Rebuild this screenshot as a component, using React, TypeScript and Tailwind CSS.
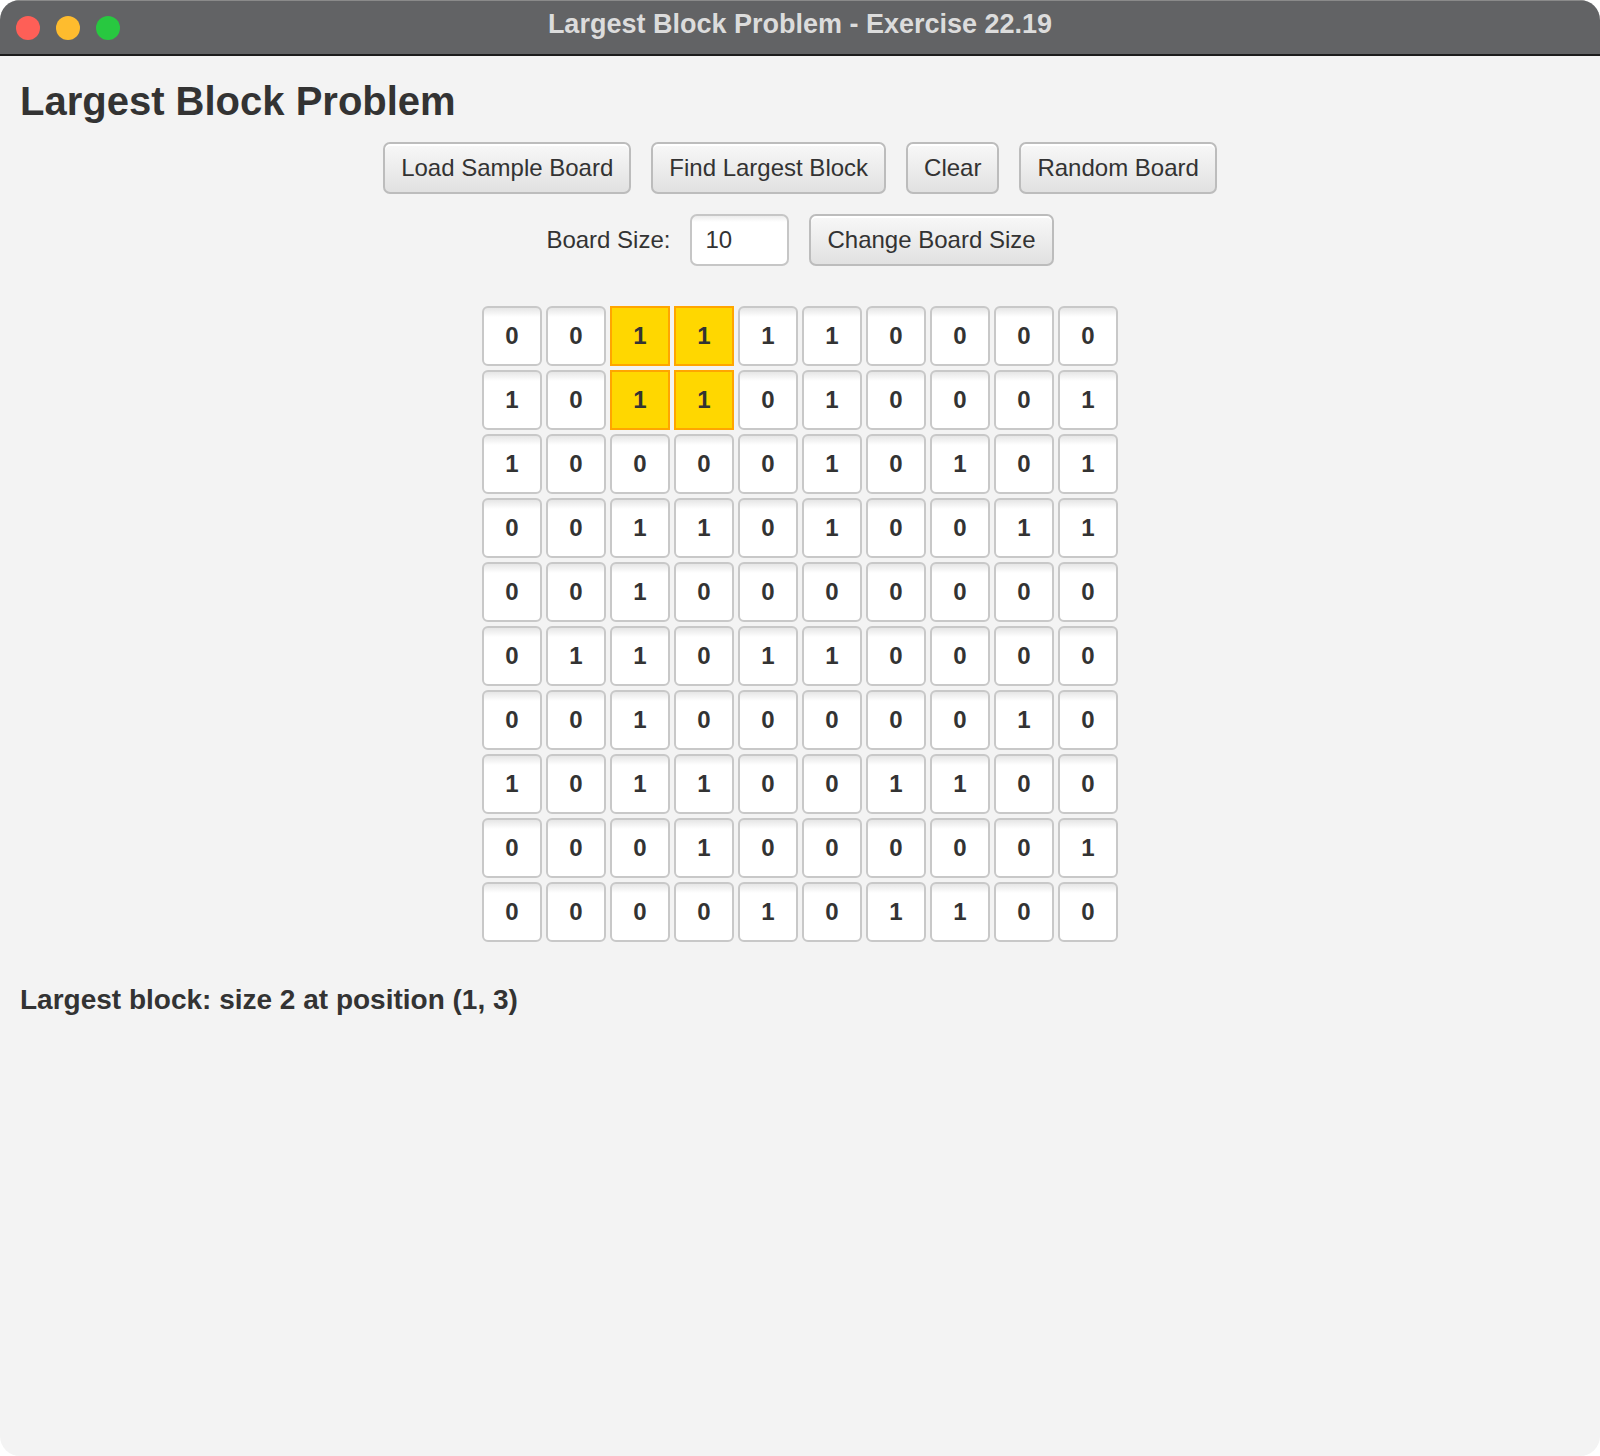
import React from "react"

const BOARD: number[][] = [
  [0, 0, 1, 1, 1, 1, 0, 0, 0, 0],
  [1, 0, 1, 1, 0, 1, 0, 0, 0, 1],
  [1, 0, 0, 0, 0, 1, 0, 1, 0, 1],
  [0, 0, 1, 1, 0, 1, 0, 0, 1, 1],
  [0, 0, 1, 0, 0, 0, 0, 0, 0, 0],
  [0, 1, 1, 0, 1, 1, 0, 0, 0, 0],
  [0, 0, 1, 0, 0, 0, 0, 0, 1, 0],
  [1, 0, 1, 1, 0, 0, 1, 1, 0, 0],
  [0, 0, 0, 1, 0, 0, 0, 0, 0, 1],
  [0, 0, 0, 0, 1, 0, 1, 1, 0, 0],
]

// cells of the largest block found
const HIGHLIGHT = new Set(["0-2", "0-3", "1-2", "1-3"])

function FxButton({ label }: { label: string }) {
  return (
    <button className="h-[52px] px-[16px] rounded-[7px] border-2 border-[#bcbcbc] bg-[linear-gradient(to_bottom,#f8f8f8,#e1e1e1)] shadow-[inset_0_2px_0_#ffffff] text-[24px] text-[#333333] leading-none">
      {label}
    </button>
  )
}

function Cell({ value, active }: { value: number; active: boolean }) {
  if (active) {
    return (
      <div className="w-[60px] h-[60px] flex items-center justify-center bg-[#ffd700] border-2 border-[#ffa500] text-[24px] font-bold text-[#333333]">
        {value}
      </div>
    )
  }
  return (
    <div className="w-[60px] h-[60px] flex items-center justify-center rounded-[6px] border-2 border-[#c8c8c8] bg-[linear-gradient(to_bottom,#e6e6e6,#ffffff_9px)] text-[24px] font-bold text-[#333333]">
      {value}
    </div>
  )
}

export default function App() {
  return (
    <div className="w-[1600px] h-[1456px] bg-white font-['Liberation_Sans',Arial,sans-serif]">
      <div className="h-full flex flex-col rounded-[20px] overflow-hidden bg-[#f3f3f3]">
        <div className="h-[56px] shrink-0 grid grid-cols-[1fr_auto_1fr] items-center bg-[#626365] border-b-2 border-[#1c1c1c] shadow-[inset_0_1px_0_#8a8a8a]">
          <div className="flex items-center gap-[16px] pl-[16px] pt-[2px]">
            <span className="w-[24px] h-[24px] rounded-full bg-[#fe5f57]" />
            <span className="w-[24px] h-[24px] rounded-full bg-[#febc2e]" />
            <span className="w-[24px] h-[24px] rounded-full bg-[#28c840]" />
          </div>
          <div className="pb-[5px] text-[27px] font-bold text-[#dcdcdc]">Largest Block Problem - Exercise 22.19</div>
          <div />
        </div>

        <div className="flex flex-col px-[20px] pt-[22px]">
          <h1 className="text-[40px] leading-[46px] font-bold text-[#333333]">Largest Block Problem</h1>

          <div className="mt-[18px] flex justify-center gap-[20px]">
            <FxButton label="Load Sample Board" />
            <FxButton label="Find Largest Block" />
            <FxButton label="Clear" />
            <FxButton label="Random Board" />
          </div>

          <div className="mt-[20px] flex justify-center items-center gap-[20px]">
            <span className="text-[24px] text-[#333333]">Board Size:</span>
            <div className="w-[99px] h-[52px] flex items-center px-[13px] rounded-[7px] border-2 border-[#c6c6c6] bg-[linear-gradient(to_bottom,#ececec,#ffffff_6px)] text-[24px] text-[#333333]">
              10
            </div>
            <FxButton label="Change Board Size" />
          </div>

          <div className="mt-[40px] self-center grid grid-cols-10 gap-[4px]">
            {BOARD.map((row, r) =>
              row.map((v, c) => <Cell key={`${r}-${c}`} value={v} active={HIGHLIGHT.has(`${r}-${c}`)} />)
            )}
          </div>

          <p className="mt-[42px] text-[28px] leading-[32px] font-bold text-[#333333]">
            Largest block: size 2 at position (1, 3)
          </p>
        </div>
      </div>
    </div>
  )
}
